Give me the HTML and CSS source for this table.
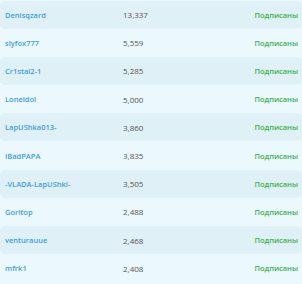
FILE: index.html
```html
<!DOCTYPE html>
<html>
<head>
<meta charset="utf-8">
<link rel="stylesheet" href="styles.css">
</head>
<body>
<div class="list">
  <div class="row alt"><span class="name">Denisqzard</span><span class="num">13,337</span><span class="status">Подписаны</span></div>
  <div class="row"><span class="name">slyfox777</span><span class="num">5,559</span><span class="status">Подписаны</span></div>
  <div class="row alt"><span class="name">Cr1stal2-1</span><span class="num">5,285</span><span class="status">Подписаны</span></div>
  <div class="row"><span class="name">Loneldol</span><span class="num">5,000</span><span class="status">Подписаны</span></div>
  <div class="row alt"><span class="name">LapUShka013-</span><span class="num">3,860</span><span class="status">Подписаны</span></div>
  <div class="row"><span class="name">IBadPAPA</span><span class="num">3,835</span><span class="status">Подписаны</span></div>
  <div class="row alt"><span class="name">-VLADA-LapUShki-</span><span class="num">3,505</span><span class="status">Подписаны</span></div>
  <div class="row"><span class="name">Goritop</span><span class="num">2,488</span><span class="status">Подписаны</span></div>
  <div class="row alt"><span class="name">venturauue</span><span class="num">2,468</span><span class="status">Подписаны</span></div>
  <div class="row"><span class="name">mfrk1</span><span class="num">2,408</span><span class="status">Подписаны</span></div>
</div>
</body>
</html>
```
FILE: styles.css
```css
html, body {
  margin: 0;
  padding: 0;
  background: #ebf8fd;
}
body {
  font-family: "Open Sans", "Noto Sans", sans-serif;
  font-size: 8px;
}
.list {
  padding-top: 0.5px;
}
.row {
  display: grid;
  grid-template-columns: 118px 1fr auto;
  align-items: center;
  height: 28.2px;
  padding: 0 4px 0 5px;
  border-radius: 5px;
  box-sizing: border-box;
}
.row.alt {
  background: #dff1f7;
}
.name {
  color: #3d9ee0;
  font-weight: 600;
  font-size: 7.5px;
}
.num {
  color: #555;
}
.status {
  color: #3bb34a;
  font-weight: 600;
  font-size: 7.5px;
}
```
